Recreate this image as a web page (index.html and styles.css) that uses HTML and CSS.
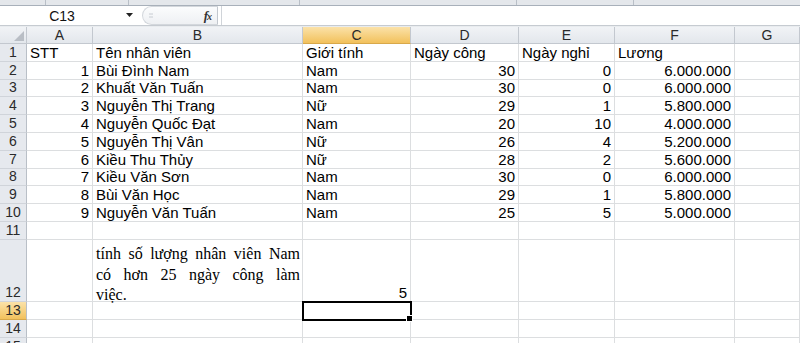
FILE: index.html
```html
<!DOCTYPE html>
<html lang="vi">
<head>
<meta charset="utf-8">
<link rel="stylesheet" href="styles.css">
</head>
<body>
<div class="ribbon">
  <div class="rb rb1"></div><div class="rb rb2"></div><div class="rb rb3"></div><div class="rb rb4"></div><div class="rb rb5"></div><div class="rb rb6"></div>
</div>
<div class="fbar">
  <div class="namebox">C13</div>
  <div class="nbdrop"><svg width="8" height="5" viewBox="0 0 8 5"><path d="M0 0h7L3.5 4z" fill="#222"/></svg></div>
  <div class="fxzone">
    <svg class="grip" width="4" height="6" viewBox="0 0 4 6"><path d="M0 1h4M0 4h4" stroke="#c8ccd2" stroke-width="1"/></svg>
    <span class="fx">f<span class="fxx">x</span></span>
  </div>
  <div class="finput"></div>
</div>
<div class="gap"></div>
<div class="sheet">
  <div class="corner"><svg width="10" height="10" viewBox="0 0 10 10"><path d="M10 0V10H0z" fill="#b9bec5"/></svg></div>
  <div class="ch">A</div><div class="ch">B</div><div class="ch sel">C</div><div class="ch">D</div><div class="ch">E</div><div class="ch">F</div><div class="ch">G</div>

  <div class="rh">1</div><div class="c">STT</div><div class="c">Tên nhân viên</div><div class="c">Giới tính</div><div class="c">Ngày công</div><div class="c">Ngày nghỉ</div><div class="c">Lương</div><div class="c"></div>
  <div class="rh">2</div><div class="c n">1</div><div class="c">Bùi Đình Nam</div><div class="c">Nam</div><div class="c n">30</div><div class="c n">0</div><div class="c n">6.000.000</div><div class="c"></div>
  <div class="rh">3</div><div class="c n">2</div><div class="c">Khuất Văn Tuấn</div><div class="c">Nam</div><div class="c n">30</div><div class="c n">0</div><div class="c n">6.000.000</div><div class="c"></div>
  <div class="rh">4</div><div class="c n">3</div><div class="c">Nguyễn Thị Trang</div><div class="c">Nữ</div><div class="c n">29</div><div class="c n">1</div><div class="c n">5.800.000</div><div class="c"></div>
  <div class="rh">5</div><div class="c n">4</div><div class="c">Nguyễn Quốc Đạt</div><div class="c">Nam</div><div class="c n">20</div><div class="c n">10</div><div class="c n">4.000.000</div><div class="c"></div>
  <div class="rh">6</div><div class="c n">5</div><div class="c">Nguyễn Thị Vân</div><div class="c">Nữ</div><div class="c n">26</div><div class="c n">4</div><div class="c n">5.200.000</div><div class="c"></div>
  <div class="rh">7</div><div class="c n">6</div><div class="c">Kiều Thu Thủy</div><div class="c">Nữ</div><div class="c n">28</div><div class="c n">2</div><div class="c n">5.600.000</div><div class="c"></div>
  <div class="rh">8</div><div class="c n">7</div><div class="c">Kiều Văn Sơn</div><div class="c">Nam</div><div class="c n">30</div><div class="c n">0</div><div class="c n">6.000.000</div><div class="c"></div>
  <div class="rh">9</div><div class="c n">8</div><div class="c">Bùi Văn Học</div><div class="c">Nam</div><div class="c n">29</div><div class="c n">1</div><div class="c n">5.800.000</div><div class="c"></div>
  <div class="rh">10</div><div class="c n">9</div><div class="c">Nguyễn Văn Tuấn</div><div class="c">Nam</div><div class="c n">25</div><div class="c n">5</div><div class="c n">5.000.000</div><div class="c"></div>
  <div class="rh">11</div><div class="c"></div><div class="c"></div><div class="c"></div><div class="c"></div><div class="c"></div><div class="c"></div><div class="c"></div>
  <div class="rh">12</div><div class="c"></div>
  <div class="c wrap"><span class="ln">tính số lượng nhân viên Nam</span><span class="ln">có hơn 25 ngày công làm</span><span class="ln last">việc.</span></div>
  <div class="c n">5</div><div class="c"></div><div class="c"></div><div class="c"></div><div class="c"></div>
  <div class="rh sel">13</div><div class="c"></div><div class="c"></div><div class="c active"></div><div class="c"></div><div class="c"></div><div class="c"></div><div class="c"></div>
  <div class="rh">14</div><div class="c"></div><div class="c"></div><div class="c"></div><div class="c"></div><div class="c"></div><div class="c"></div><div class="c"></div>
  <div class="rh">15</div><div class="c"></div><div class="c"></div><div class="c"></div><div class="c"></div><div class="c"></div><div class="c"></div><div class="c"></div>
</div>
</body>
</html>
```

FILE: styles.css
```css
html, body {
  margin: 0;
  padding: 0;
  background: #ffffff;
  overflow: hidden;
}
body {
  width: 800px;
  height: 343px;
  font-family: "Liberation Sans", Arial, sans-serif;
  color: #000;
}
.ribbon {
  height: 5px;
  display: flex;
  background: #e4e7eb;
  border-bottom: 1px solid #a8b0ba;
}
.rb { height: 5px; border-right: 1px solid #b9bfc7; }
.rb1 { width: 45px; }
.rb2 { width: 82px; }
.rb3 { width: 170px; }
.rb4 { width: 216px; }
.rb5 { width: 116px; }
.rb6 { flex: 1; border-right: none; }

.fbar {
  height: 19px;
  display: flex;
  align-items: stretch;
  background: #ffffff;
  border-bottom: 1px solid #c6cbd1;
}
.namebox {
  width: 118px;
  display: flex;
  align-items: center;
  justify-content: center;
  font-size: 14px;
  color: #111;
  padding-left: 6px;
  box-sizing: border-box;
}
.nbdrop {
  width: 24px;
  display: flex;
  align-items: center;
  justify-content: center;
}
.fxzone {
  width: 76px;
  margin: 0;
  border: 1px solid #d3d7dc;
  border-right: 1px solid #c2c7ce;
  border-radius: 10px 0 0 10px;
  background: linear-gradient(#fbfcfd, #eef0f3);
  display: flex;
  align-items: center;
  justify-content: space-between;
  padding: 0 6px 0 6px;
  box-sizing: border-box;
}
.fx {
  font-family: "Liberation Serif", "Times New Roman", serif;
  font-style: italic;
  font-weight: bold;
  font-size: 13px;
  color: #333;
  letter-spacing: -1px;
}
.fxx { font-size: 10px; }
.finput {
  flex: 1;
  border-left: 1px solid #d0d4d9;
  margin-left: 3px;
}
.gap {
  height: 1px;
  background: #e9ecef;
}

.sheet {
  display: grid;
  grid-template-columns: 27px 66px 210px 108px 108px 96px 120px 1fr;
  grid-template-rows: 17px repeat(11, 17.8px) 62px repeat(3, 18px);
}
.corner, .ch, .rh {
  background: linear-gradient(#f1f3f6, #e3e7ec);
  border-right: 1px solid #c3c8cf;
  border-bottom: 1px solid #c3c8cf;
  box-sizing: border-box;
  color: #2a2a2a;
  font-size: 14px;
  display: flex;
  align-items: center;
  justify-content: center;
}
.corner {
  align-items: flex-end;
  justify-content: flex-end;
  padding: 0 2px 2px 0;
}
.corner svg { display: block; }
.rh {
  background: #e6e9ee;
  border-right: 1px solid #b9bfc7;
  border-bottom: 1px solid #d0d4da;
  align-items: flex-end;
  line-height: 17px;
}
.ch.sel, .rh.sel {
  background: linear-gradient(#fbe2a9, #f2c15c);
  border-bottom-color: #d8a84a;
}
.c {
  border-right: 1px solid #dcdee0;
  border-bottom: 1px solid #dcdee0;
  box-sizing: border-box;
  font-size: 15px;
  line-height: 17px;
  padding: 0 3px;
  white-space: nowrap;
  display: flex;
  align-items: flex-end;
  overflow: visible;
  position: relative;
}
.c.n { justify-content: flex-end; }
.c.wrap {
  flex-direction: column;
  align-items: stretch;
  justify-content: flex-end;
  white-space: normal;
  font-family: "Liberation Serif", "Times New Roman", serif;
  font-size: 16px;
  line-height: 20.5px;
  padding: 0 2px 0 3px;
}
.ln {
  display: block;
  text-align: justify;
  text-align-last: justify;
}
.ln.last {
  text-align-last: left;
  margin-bottom: -5px;
}
.c.active {
  outline: 2px solid #000;
  outline-offset: -1px;
  z-index: 2;
}
.c.active::after {
  content: "";
  position: absolute;
  right: -3px;
  bottom: -3px;
  width: 5px;
  height: 5px;
  background: #000;
  border: 1px solid #fff;
}
```
